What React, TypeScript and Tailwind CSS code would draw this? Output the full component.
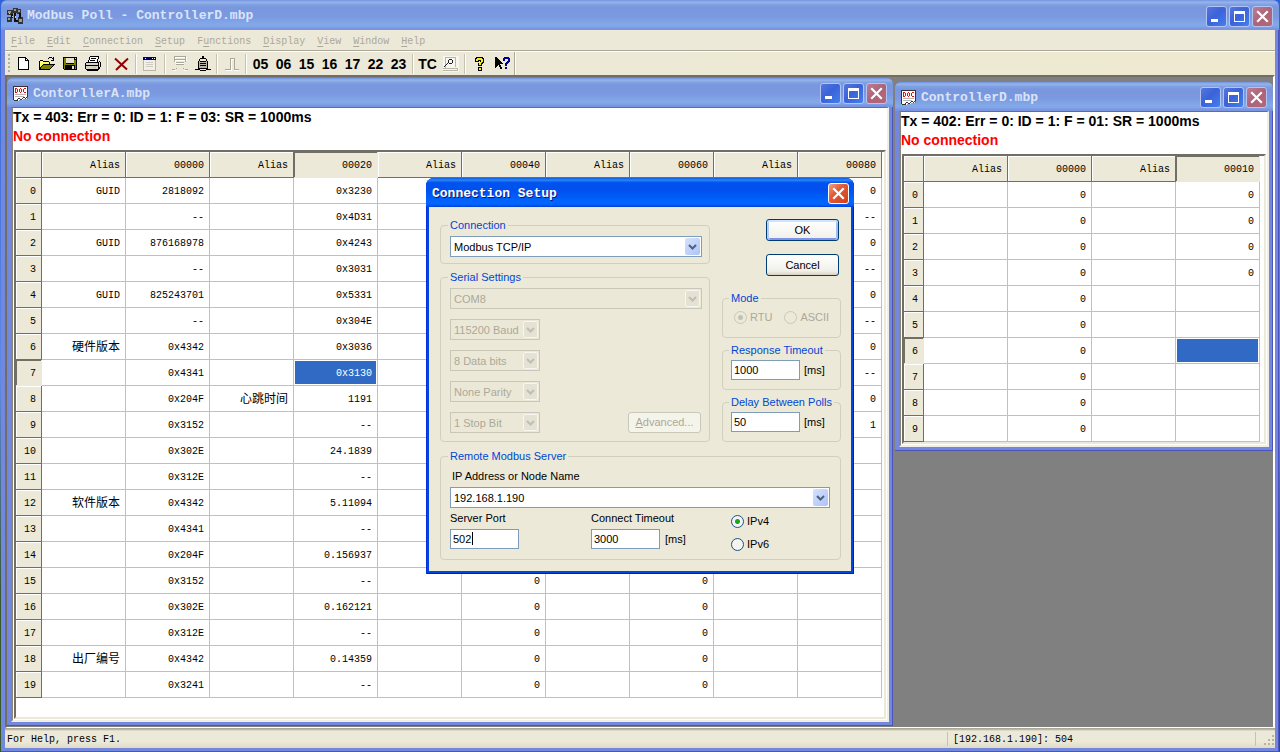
import React from 'react';
import clsx from 'clsx';

type Cell = string | undefined;

interface GridProps {
  headers: string[];
  rows: Cell[][];
  activeRow: number;
  activeCol: number;
  narrow?: boolean;
}

const MENUS: [string, string, string][] = [
  ['', 'F', 'ile'],
  ['', 'E', 'dit'],
  ['', 'C', 'onnection'],
  ['', 'S', 'etup'],
  ['F', 'u', 'nctions'],
  ['', 'D', 'isplay'],
  ['', 'V', 'iew'],
  ['', 'W', 'indow'],
  ['', 'H', 'elp'],
];

const FUNCTION_CODES = ['05', '06', '15', '16', '17', '22', '23'];

const HEADERS_A = ['Alias', '00000', 'Alias', '00020', 'Alias', '00040', 'Alias', '00060', 'Alias', '00080'];
const HEADERS_D = ['Alias', '00000', 'Alias', '00010'];

// alias, value, alias, value, last column
const DATA_A: [string, string, string, string, string][] = [
  ['GUID', '2818092', '', '0x3230', '0'],
  ['', '--', '', '0x4D31', '--'],
  ['GUID', '876168978', '', '0x4243', '0'],
  ['', '--', '', '0x3031', '--'],
  ['GUID', '825243701', '', '0x5331', '0'],
  ['', '--', '', '0x304E', '--'],
  ['硬件版本', '0x4342', '', '0x3036', '0'],
  ['', '0x4341', '', '0x3130', '--'],
  ['', '0x204F', '心跳时间', '1191', '0'],
  ['', '0x3152', '', '--', '1'],
  ['', '0x302E', '', '24.1839', ''],
  ['', '0x312E', '', '--', ''],
  ['软件版本', '0x4342', '', '5.11094', ''],
  ['', '0x4341', '', '--', ''],
  ['', '0x204F', '', '0.156937', ''],
  ['', '0x3152', '', '--', ''],
  ['', '0x302E', '', '0.162121', ''],
  ['', '0x312E', '', '--', ''],
  ['出厂编号', '0x4342', '', '0.14359', ''],
  ['', '0x3241', '', '--', ''],
];

const ROWS_A: Cell[][] = DATA_A.map(([a, b, c, d, last], i) => {
  const spare = i >= 15 ? '0' : '';
  return [a, b, c, d, '', spare, '', spare, '', last];
});
const ROWS_D: Cell[][] = Array.from({ length: 10 }, (_, i) => ['', '0', '', i < 4 ? '0' : '']);

const MONO = "font-['Liberation_Mono','Noto_Sans_CJK_SC',monospace]";
const TITLE_INACTIVE =
  'bg-[linear-gradient(to_bottom,#7697e7_0%,#7e9ee3_3%,#9ab4ea_7%,#82a5e4_14%,#7c9fe2_17%,#7996de_25%,#7b99e1_56%,#82a9e9_81%,#80a5e7_89%,#7b96e1_94%,#7a93df_100%)]';

function AppIcon() {
  return (
    <svg width="16" height="16" viewBox="0 0 16 16" shapeRendering="crispEdges" aria-hidden="true">
      <path d="M0 2h6v5H0zM6 0h5v5H6zM10 1h4v5h-4zM0 9h5v5H0zM11 9h5v7h-5z" fill="#333" />
      <path d="M4 6h2v4H4zM7 5h2v9H7zM8 12h3v2H8zM12 5h2v5h-2z" fill="#111" />
      <path d="M1 3h3v2H1zM7 1h2v2H7zM11 2h2v2h-2zM1 10h2v2H1zM12 11h3v3h-3z" fill="#999" />
      <path d="M5 8h1v1H5zM8 8h1v2H8zM2 5h1v1H2z" fill="#ccc" />
    </svg>
  );
}

function DocIcon() {
  return (
    <svg width="16" height="16" viewBox="0 0 16 16" shapeRendering="crispEdges" aria-hidden="true">
      <path d="M0 0h15v11l-2 2h-2l-2 1H7l-2 1H2l-2-1z" fill="#fff" />
      <path d="M0 0h15v1H0zM0 0h1v14H0zM14 0h1v11h-1zM1 14h3v1H1zM4 13h1v2H4zM5 12h2v1H5zM7 13h2v1H7zM9 12h1v1H9zM10 11h2v1h-2zM12 12h1v1h-1zM13 11h1v1h-1z" fill="#333" />
      <path d="M2 2h1v5H2zM3 2h1v1H3zM3 6h1v1H3zM4 3h1v3H4zM6 3h1v3H6zM7 2h1v1H7zM7 6h1v1H7zM8 3h1v3H8zM10 3h1v3h-1zM11 2h2v1h-2zM11 6h2v1h-2z" fill="#e01010" />
      <path d="M2 8h11v1H2zM2 10h9v1H2z" fill="#b8b8b8" />
      <path d="M14 11h1v2h-1z" fill="#2c8c9c" />
    </svg>
  );
}

function CaptionButton({ kind, active }: { kind: 'min' | 'max' | 'close'; active?: boolean }) {
  return (
    <button
      type="button"
      aria-label={kind}
      className={clsx(
        'flex h-[21px] w-[21px] items-center justify-center rounded-[3px] border',
        active ? 'border-white' : 'border-[#b4c4f2]',
        kind !== 'close' && 'bg-[linear-gradient(135deg,#5577dc,#3b62d8_45%,#4380ee)]',
        kind === 'close' && !active && 'bg-[linear-gradient(135deg,#bb7d96,#ad6478_50%,#b5677a)]',
        kind === 'close' && active && 'bg-[linear-gradient(135deg,#f0a088,#e25a36_40%,#cf3f17)]',
      )}
    >
      <svg width="19" height="19" viewBox="0 0 19 19" shapeRendering={kind === 'close' ? 'auto' : 'crispEdges'} aria-hidden="true">
        {kind === 'min' && <path d="M4 12h7v3H4z" fill="#fff" />}
        {kind === 'max' && <path d="M4 4h11v11H4zM5 7v7h9V7z" fill="#fff" fillRule="evenodd" />}
        {kind === 'close' && <path d="M5 5l9 9M14 5l-9 9" stroke="#fff" strokeWidth="2.2" strokeLinecap="square" />}
      </svg>
    </button>
  );
}

function TitleBar({ icon, title, className }: { icon: React.ReactNode; title: string; className?: string }) {
  return (
    <div className={clsx('flex items-center gap-1 rounded-t-md px-[6px] pt-[2px]', TITLE_INACTIVE, className)}>
      {icon}
      <h2 className={clsx('flex-1 truncate text-[13px] leading-5 font-bold text-[#d8e4f8]', MONO)}>{title}</h2>
      <div className="flex gap-[2px]">
        <CaptionButton kind="min" />
        <CaptionButton kind="max" />
        <CaptionButton kind="close" />
      </div>
    </div>
  );
}

function Separator() {
  return (
    <div className="flex w-[6px] justify-center">
      <div className="h-5 w-[2px] border-l border-[#c5c2b2] bg-white" />
    </div>
  );
}

function ToolButton({ label, children }: { label: string; children: React.ReactNode }) {
  return (
    <button type="button" aria-label={label} className="flex h-[22px] w-[23px] items-center justify-center text-sm font-bold">
      {children}
    </button>
  );
}

function ToolIcon({ children }: { children: React.ReactNode }) {
  return (
    <svg width="16" height="16" viewBox="0 0 16 16" shapeRendering="crispEdges" aria-hidden="true">
      {children}
    </svg>
  );
}

function Toolbar() {
  return (
    <div className="flex h-[23px] items-center bg-[linear-gradient(to_right,#ece9d8,#ece9d8_40%,#efe9cf)] pl-[3px]">
      <div className="mr-[2px] h-5 w-[2px] bg-[repeating-linear-gradient(to_bottom,#b5b29f_0_2px,transparent_2px_4px)]" />
      <ToolButton label="New">
        <ToolIcon>
          <path d="M3 2h7v1h1v1h1v1h1v9H3z" fill="#fff" />
          <path d="M2 1h8v1H2zM2 1h1v13H2zM2 13h11v1H2zM12 5h1v9h-1zM9 1h1v4H9zM9 4h4v1H9zM10 2h1v1h-1zM11 3h1v1h-1z" fill="#000" />
        </ToolIcon>
      </ToolButton>
      <ToolButton label="Open">
        <ToolIcon>
          <path d="M1 5h3v1h6v3h5l-4 4H1z" fill="#ffff66" />
          <path d="M4 9h11l-4 4H1z" fill="#808000" />
          <path d="M1 4h3v1H1zM0 5h1v9H0zM4 5h6v1H4zM10 6h1v2h-1zM4 8h12v1H4zM0 13h11v1H0zM3 9h1v1H3zM2 10h1v1H2zM1 11h1v2H1zM14 9h1v1h-1zM13 10h1v1h-1zM12 11h1v1h-1zM11 12h1v1h-1zM9 2h1v1H9zM10 1h3v1h-3zM13 2h1v1h-1zM14 1h1v4h-1zM12 4h3v1h-3z" fill="#000" />
        </ToolIcon>
      </ToolButton>
      <ToolButton label="Save">
        <ToolIcon>
          <path d="M1 1h14v13H2l-1-1z" fill="#000" />
          <path d="M2 2h1v11H2zM13 4h1v9h-1zM3 8h10v1H3z" fill="#808000" />
          <path d="M4 2h8v5H4zM13 2h1v1h-1zM10 10h2v3h-2z" fill="#e6e3d4" />
          <path d="M3 2h1v6H3zM12 4h1v5h-1z" fill="#808000" />
        </ToolIcon>
      </ToolButton>
      <ToolButton label="Print">
        <ToolIcon>
          <path d="M5 1h9l-2 6H3z" fill="#fff" />
          <path d="M1 7h13v6H1z" fill="#d8d5c6" />
          <path d="M5 0h9v1H5zM4 1h1v3H4zM3 4h1v3H3zM13 1h1v2h-1zM12 3h1v3h-1zM6 2h5v1H6zM5 4h5v1H5zM1 6h13v1H1zM0 7h1v6H0zM1 9h12v1H1zM1 13h13v1H1zM13 7h1v6h-1zM14 5h1v1h-1zM15 6h1v5h-1zM14 11h1v2h-1zM2 14h11v1H2z" fill="#000" />
          <path d="M8 11h3v1H8z" fill="#e0d000" />
        </ToolIcon>
      </ToolButton>
      <Separator />
      <ToolButton label="Delete">
        <svg width="16" height="16" viewBox="0 0 16 16" aria-hidden="true">
          <path d="M1 2.500l12 11M14 2.500L2 14" stroke="#900000" strokeWidth="2" fill="none" />
        </svg>
      </ToolButton>
      <Separator />
      <ToolButton label="Setup">
        <ToolIcon>
          <path d="M0 1h13v14H0z" fill="#b9b6a8" />
          <path d="M1 4h11v10H1z" fill="#f2f0e6" />
          <path d="M0 1h13v3H0z" fill="#000080" />
          <path d="M2 2h1v1H2zM9 2h1v1H9zM11 2h1v1h-1z" fill="#fff" />
          <path d="M3 6h7v1H3zM3 8h7v1H3zM3 10h7v1H3z" fill="#cfcdc0" />
        </ToolIcon>
      </ToolButton>
      <Separator />
      <ToolButton label="Connect">
        <ToolIcon>
          <path d="M4 1h10v1H4zM4 4h10v1H4zM4 7h8v1H4zM1 14h3v1H1zM12 14h3v1h-3zM3 1h1v6H3zM14 1h1v4h-1z" fill="#fff" />
          <path d="M3 0h10v1H3zM3 3h10v1H3zM4 6h8v1H4zM4 8h8v1H4zM2 0h1v6H2zM13 0h1v6h-1zM0 13h3v1H0zM13 13h3v1h-3zM4 12h1v1H4zM11 12h1v1h-1z" fill="#aca899" />
        </ToolIcon>
      </ToolButton>
      <ToolButton label="Disconnect">
        <ToolIcon>
          <path d="M4 5h8v8H4z" fill="#b8b5a7" />
          <path d="M7 0h2v2H7zM5 2h6v1H5zM4 3h1v2H4zM11 3h1v2h-1zM5 5h6v1H5zM3 5h1v8H3zM12 5h1v8h-1zM5 7h6v1H5zM5 9h6v1H5zM3 12h10v1H3zM0 13h5v1H0zM11 13h5v1h-5zM5 14h6v1H5z" fill="#000" />
        </ToolIcon>
      </ToolButton>
      <Separator />
      <ToolButton label="Pulse">
        <ToolIcon>
          <path d="M2 14h5V3h3v11h5" fill="none" stroke="#fff" />
          <path d="M1 13h5V2h4v11h5" fill="none" stroke="#aca899" />
        </ToolIcon>
      </ToolButton>
      <Separator />
      {FUNCTION_CODES.map((code) => (
        <ToolButton key={code} label={code}>{code}</ToolButton>
      ))}
      <Separator />
      <ToolButton label="Test center">TC</ToolButton>
      <ToolButton label="Traffic">
        <ToolIcon>
          <path d="M0 0h16v16H0z" fill="#f6f5ee" />
          <path d="M2 1h11v1H2zM2 1h1v11H2zM12 1h1v10h-1zM4 12h11v1H4zM14 12h1v3h-1zM4 14h11v1H4zM0 12h4v1H0zM0 14h4v1H0z" fill="#b9b6a8" />
          <path d="M6 3h3v1H6zM5 4h1v3H5zM9 4h1v3H9zM6 7h3v1H6zM4 7h1v1H4zM3 8h1v1H3zM2 9h1v1H2zM1 10h1v1H1z" fill="#222" />
        </ToolIcon>
      </ToolButton>
      <Separator />
      <ToolButton label="Help">
        <ToolIcon>
          <path d="M4 1h7v1h1v5h-1v1h-1v2H6V7h2V5H7v1H3V2h1zM6 11h4v4H6z" fill="#000" />
          <path d="M5 2h5v1h1v3h-1v1H9v2H7V7h1V6h1V4H6v1H4V3h1zM7 12h2v2H7z" fill="#f8f000" />
        </ToolIcon>
      </ToolButton>
      <ToolButton label="Context help">
        <ToolIcon>
          <path d="M0 1v11h1v-1h1v-1h1v-1h1v2h1v2h2v-2H6v-2H5V8h3V7H7V6H6V5H5V4H4V3H3V2H2V1z" fill="#000" />
          <path d="M9 1h5v1h1v4h-1v1h-1v1h-1v2h-2V7h1V6h1V5h1V3h-3v2H8V2h1zM10 11h2v2h-2z" fill="#000090" />
        </ToolIcon>
      </ToolButton>
      <div className="h-full w-[2px] border-l border-[#aca899] bg-white" />
    </div>
  );
}

function Grid({ headers, rows, activeRow, activeCol, narrow }: GridProps) {
  const raised = 'border-r border-b border-[#716f64] bg-[#ece9d8] shadow-[inset_1px_1px_0_#fff]';
  const pressed = 'border-r border-b border-[#ece9d8] bg-[#ece9d8] shadow-[inset_1px_1px_0_#716f64]';

  return (
    <table className={clsx('border-separate border-spacing-0 text-[10px]', MONO)}>
      <thead>
        <tr className="h-[26px]">
          <th className={clsx(raised, narrow ? 'w-5 min-w-5' : 'w-[26px] min-w-[26px]')} />
          {headers.map((header, i) => (
            <th
              key={i}
              scope="col"
              className={clsx('w-[84px] min-w-[84px] p-0 pt-[2px] pr-[5px] text-right font-normal', i === activeCol ? pressed : raised)}
            >
              {header}
            </th>
          ))}
        </tr>
      </thead>
      <tbody>
        {rows.map((row, r) => (
          <tr key={r} className="h-[26px]">
            <th scope="row" className={clsx('p-0 pt-[2px] pr-[5px] text-right font-normal', r === activeRow ? pressed : raised)}>
              {r}
            </th>
            {row.map((value, c) => (
              <td
                key={c}
                className={clsx(
                  'border-r border-b border-[#c0c0c0] p-0 pt-[2px] pr-[5px] text-right leading-4',
                  r === activeRow && c === activeCol && 'bg-[#316ac5] text-white shadow-[inset_0_0_0_1px_#fff]',
                  value && /[\u4e00-\u9fff]/.test(value) && 'text-xs',
                )}
              >
                {value}
              </td>
            ))}
          </tr>
        ))}
      </tbody>
    </table>
  );
}

interface ChildWindowProps {
  title: string;
  status: string;
  className?: string;
  gridClassName?: string;
  children: React.ReactNode;
}

function ChildWindow({ title, status, className, gridClassName, children }: ChildWindowProps) {
  return (
    <section className={clsx('rounded-t-md bg-[#7387dc] shadow-[inset_-1px_-1px_0_#4a54bc]', className)}>
      <TitleBar icon={<DocIcon />} title={title} className="h-[29px]" />
      <div className="mx-1 mb-1 border-t border-r-2 border-b-2 border-l-2 border-t-[#716f64] border-r-[#f1efe2] border-b-[#f1efe2] border-l-[#8a8878] bg-white pr-px pb-px">
        <p className="text-sm leading-[19px] font-bold">{status}</p>
        <p className="text-sm leading-[19px] font-bold text-[#ff0000]">No connection</p>
        <div className={clsx('mt-1 ml-px border-2 border-t-[#716f64] border-r-[#ece9d8] border-b-[#ece9d8] border-l-[#716f64]', gridClassName)}>
          {children}
        </div>
      </div>
    </section>
  );
}

function Combo({ label, value, disabled, className }: { label: string; value: string; disabled?: boolean; className?: string }) {
  return (
    <div className={clsx('relative h-[21px]', className)}>
      <select
        aria-label={label}
        disabled={disabled}
        className={clsx(
          'h-full w-full appearance-none border pl-[3px] text-[11px] leading-4 opacity-100 outline-none',
          disabled ? 'border-[#c9c7ba] bg-[#ebe8d7] text-[#aca899]' : 'border-[#7f9db9] bg-white text-black',
        )}
      >
        <option>{value}</option>
      </select>
      <span
        className={clsx(
          'pointer-events-none absolute top-[2px] right-[2px] flex h-[17px] w-[15px] items-center justify-center rounded-[2px]',
          disabled ? 'border border-[#f7f6f0] bg-[#e4e2d4]' : 'bg-[linear-gradient(135deg,#d6e1fc,#adc3f8)]',
        )}
      >
        <svg width="9" height="6" viewBox="0 0 9 6" aria-hidden="true">
          <path d="M1 1l3.500 3.500L8 1" fill="none" stroke={disabled ? '#c0beb0' : '#4d6185'} strokeWidth="2" />
        </svg>
      </span>
    </div>
  );
}

function Group({ title, className, children }: { title: string; className?: string; children: React.ReactNode }) {
  return (
    <fieldset className={clsx('min-w-0 rounded-[4px] border border-[#d0d0bf]', className)}>
      <legend className="-ml-[2px] px-[2px] leading-[14px] whitespace-nowrap text-[#0046d5]">{title}</legend>
      {children}
    </fieldset>
  );
}

function TextBox({ id, value }: { id: string; value: string }) {
  return (
    <input
      id={id}
      type="text"
      defaultValue={value}
      className="h-5 w-[69px] border border-[#7f9db9] bg-white px-[2px] text-[11px] leading-4 outline-none"
    />
  );
}

function Radio({ name, label, checked, disabled }: { name: string; label: string; checked?: boolean; disabled?: boolean }) {
  return (
    <label className={clsx('flex h-[13px] items-center gap-[3px]', disabled && 'text-[#aca899]')}>
      <input
        type="radio"
        name={name}
        defaultChecked={checked}
        disabled={disabled}
        className={clsx(
          'h-[13px] w-[13px] appearance-none rounded-full border',
          disabled
            ? 'border-[#cac8bb] checked:bg-[radial-gradient(circle,#c3c1b3_0_2px,transparent_3px)]'
            : 'border-[#1c5180] bg-[#f4f4f0] checked:bg-[radial-gradient(circle,#21a121_0_2px,#f4f4f0_3px)]',
        )}
      />
      {label}
    </label>
  );
}

function ConnectionDialog() {
  return (
    <div
      role="dialog"
      aria-label="Connection Setup"
      className="absolute top-[178px] left-[426px] w-[428px] rounded-t-lg bg-[#0046e0] shadow-[inset_1px_0_0_#0831d9,inset_-1px_-1px_0_#001ea0] text-[11px]"
    >
      <div className="flex h-[29px] items-center justify-between rounded-t-lg bg-[linear-gradient(to_bottom,#0a5ce0_0%,#2b86f5_7%,#0053ee_16%,#0050ee_40%,#0066ff_85%,#0060f8_92%,#003dd7_100%)] pt-[2px] pr-[5px] pl-[6px]">
        <h2 className={clsx('text-[13px] leading-5 font-bold text-white [text-shadow:1px_1px_0_#0a1883]', MONO)}>Connection Setup</h2>
        <CaptionButton kind="close" active />
      </div>
      <form className="mx-[3px] flex flex-col gap-[7px] bg-[#ece9d8] pt-[11px] pr-[10px] pb-[11px] pl-[11px]" onSubmit={(e) => e.preventDefault()}>
        <div className="flex gap-3">
          <div className="flex w-[270px] flex-col gap-[6px]">
            <Group title="Connection" className="h-[46px] pt-[4px] pr-2 pl-[9px]">
              <Combo label="Connection" value="Modbus TCP/IP" className="w-[252px]" />
            </Group>
            <Group title="Serial Settings" className="h-[172px] pt-[4px] pr-2 pl-[9px]">
              <div className="flex flex-col gap-[10px]">
                <Combo label="Port" value="COM8" disabled className="w-[252px]" />
                <Combo label="Baud rate" value="115200 Baud" disabled className="w-[90px]" />
                <Combo label="Data bits" value="8 Data bits" disabled className="w-[90px]" />
                <Combo label="Parity" value="None Parity" disabled className="w-[90px]" />
                <div className="flex justify-between">
                  <Combo label="Stop bits" value="1 Stop Bit" disabled className="w-[90px]" />
                  <button type="button" disabled className="h-[21px] w-[73px] rounded-[3px] border border-[#c9c7ba] bg-[#f5f4ea] text-[#aca899]">
                    <span className="underline">A</span>dvanced...
                  </button>
                </div>
              </div>
            </Group>
          </div>
          <div className="flex flex-1 flex-col gap-[5px]">
            <div className="mt-px mr-[2px] mb-auto flex flex-col gap-[13px] self-end">
              <button
                type="submit"
                className="h-[22px] w-[73px] rounded-[3px] border border-[#003c74] bg-[linear-gradient(to_bottom,#ffffff,#f0f0ea)] shadow-[inset_0_2px_0_#cee3ff,inset_2px_0_0_#b4cdf5,inset_-2px_0_0_#a4bdf0,inset_0_-2px_0_#7f94e6]"
              >
                OK
              </button>
              <button type="button" className="h-[22px] w-[73px] rounded-[3px] border border-[#003c74] bg-[linear-gradient(to_bottom,#ffffff,#f0f0ea_80%,#d8d2c4)]">
                Cancel
              </button>
            </div>
            <Group title="Mode" className="h-[47px] pt-[6px] pl-[8px]">
              <div className="flex gap-3 pl-[3px]">
                <Radio name="mode" label="RTU" checked disabled />
                <Radio name="mode" label="ASCII" disabled />
              </div>
            </Group>
            <Group title="Response Timeout" className="h-[47px] pt-[3px] pl-[8px]">
              <label className="flex items-center gap-1">
                <TextBox id="response-timeout" value="1000" />
                [ms]
              </label>
            </Group>
            <Group title="Delay Between Polls" className="h-[47px] pt-[3px] pl-[8px]">
              <label className="flex items-center gap-1">
                <TextBox id="poll-delay" value="50" />
                [ms]
              </label>
            </Group>
          </div>
        </div>
        <Group title="Remote Modbus Server" className="h-[111px] px-[9px] pt-[5px]">
          <p className="pl-[2px] leading-4">IP Address or Node Name</p>
          <Combo label="IP Address or Node Name" value="192.168.1.190" className="mt-[3px] w-[380px]" />
          <div className="mt-[2px] flex">
            <div className="w-[141px]">
              <label htmlFor="server-port" className="block leading-4">Server Port</label>
              <div className="relative mt-[3px] flex">
                <TextBox id="server-port" value="502" />
                <span className="absolute top-[3px] left-[22px] h-[13px] w-px bg-black" />
              </div>
            </div>
            <div className="w-[140px]">
              <label htmlFor="connect-timeout" className="block leading-4">Connect Timeout</label>
              <div className="mt-[3px] flex items-center gap-[5px]">
                <TextBox id="connect-timeout" value="3000" />
                [ms]
              </div>
            </div>
            <div className="flex flex-col gap-[10px] pt-[5px]">
              <Radio name="ip-version" label="IPv4" checked />
              <Radio name="ip-version" label="IPv6" />
            </div>
          </div>
        </Group>
      </form>
      <div className="h-[3px]" />
    </div>
  );
}

function StatusBar() {
  return (
    <footer className={clsx('flex h-5 items-center bg-[linear-gradient(to_bottom,#aca899_0_1px,#ece9d8_3px,#ece9d8_70%,#dedac6)] pt-[2px] text-[10px]', MONO)}>
      <span className="flex-1 pl-[2px]">For Help, press F1.</span>
      <span className="flex h-[14px] w-[308px] items-center border-l border-[#c5c2b2] pl-[5px]">[192.168.1.190]: 504</span>
      <span className="flex h-[14px] w-5 items-end justify-end border-l border-[#c5c2b2]">
        <svg width="12" height="12" viewBox="0 0 12 12" shapeRendering="crispEdges" aria-hidden="true">
          <path d="M9 1h2v2H9zM5 5h2v2H5zM9 5h2v2H9zM1 9h2v2H1zM5 9h2v2H5zM9 9h2v2H9z" fill="#b8b4a2" />
        </svg>
      </span>
    </footer>
  );
}

export default function App() {
  return (
    <div className="relative flex min-h-screen flex-col bg-[linear-gradient(to_bottom,#2f62d8,#5c8ae6_50%,#35582a_80%)] px-px font-['Liberation_Sans',Arial,sans-serif] text-black">
      <TitleBar icon={<AppIcon />} title="Modbus Poll - ControllerD.mbp" className="h-[30px]" />
      <div className="flex flex-1 flex-col bg-[#7387dc] px-1 pb-1 shadow-[inset_-1px_-1px_0_#4a54bc]">
        <nav className={clsx('flex h-5 items-center gap-3 bg-[#ece9d8] pt-[2px] pl-[6px] text-[10px] text-[#aca899]', MONO)}>
          {MENUS.map(([before, key, after]) => (
            <button key={before + key + after} type="button">
              {before}
              <span className="underline underline-offset-2">{key}</span>
              {after}
            </button>
          ))}
        </nav>
        <div className="h-[2px] border-t border-[#aca899] bg-white" />
        <Toolbar />
        <main className="flex flex-1 items-start gap-[2px] border-t-2 border-r-2 border-b border-l-2 border-t-[#716f64] border-r-white border-b-white border-l-[#716f64] bg-[#808080] pt-px pb-px">
          <ChildWindow
            title="ContorllerA.mbp"
            status="Tx = 403: Err = 0: ID = 1: F = 03: SR = 1000ms"
            className="shrink-0"
            gridClassName="pr-[2px] pb-[19px]"
          >
            <Grid headers={HEADERS_A} rows={ROWS_A} activeRow={7} activeCol={3} />
          </ChildWindow>
          <ChildWindow
            title="ControllerD.mbp"
            status="Tx = 402: Err = 0: ID = 1: F = 01: SR = 1000ms"
            className="mt-1 flex-1"
          >
            <Grid headers={HEADERS_D} rows={ROWS_D} activeRow={6} activeCol={3} narrow />
          </ChildWindow>
        </main>
        <StatusBar />
      </div>
      <ConnectionDialog />
    </div>
  );
}
